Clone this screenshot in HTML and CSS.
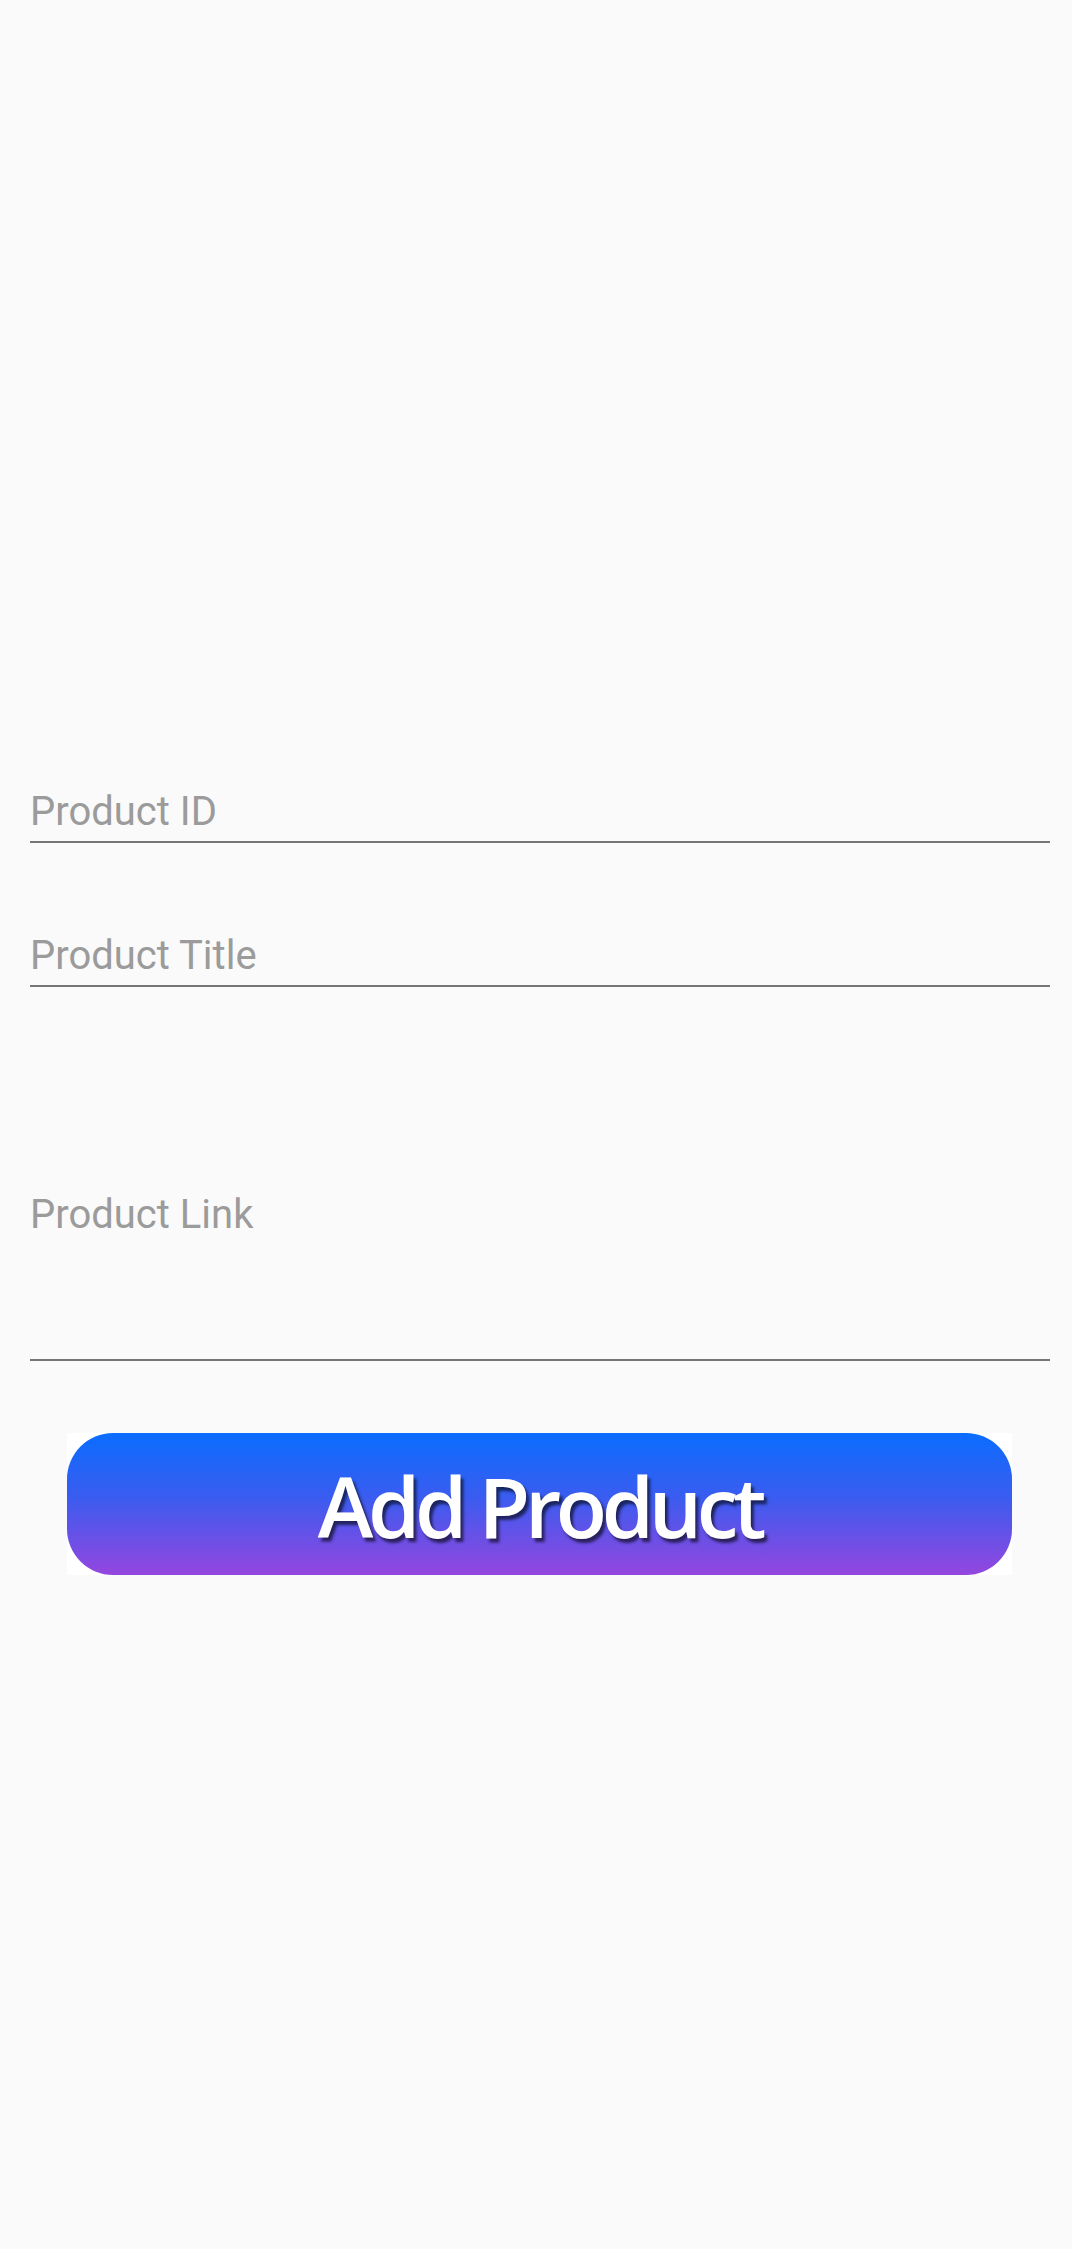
FILE: index.html
```html
<!DOCTYPE html>
<html>
<head>
<meta charset="utf-8">
<link rel="stylesheet" href="styles.css">
</head>
<body>
<main class="form">
  <div class="field field-id"><span class="hint">Product ID</span></div>
  <div class="field field-title"><span class="hint">Product Title</span></div>
  <div class="field field-link"><span class="hint">Product Link</span></div>
  <div class="btn-wrap">
    <button class="btn"><span class="btn-label">Add Product</span></button>
  </div>
</main>
</body>
</html>
```

FILE: styles.css
```css
html, body {
  margin: 0;
  padding: 0;
  background: #fafafa;
}
body {
  width: 1072px;
  height: 2249px;
  font-family: Roboto, "Noto Sans", "Liberation Sans", sans-serif;
}
.form {
  display: flex;
  flex-direction: column;
  padding: 788px 22px 0 30px;
}
.field {
  border-bottom: 2px solid #767676;
  padding-left: 0;
  padding-bottom: 6px;
}
.hint {
  display: block;
  font-size: 40px;
  line-height: 47px;
  color: #9b9b9b;
}
.field-title {
  margin-top: 89px;
}
.field-link {
  margin-top: 204px;
  padding-bottom: 121px;
}
.btn-wrap {
  margin: 72px 38px 0 37px;
  background: #ffffff;
  height: 142px;
  display: flex;
}
.btn {
  flex: 1;
  border: 0;
  padding: 0;
  margin: 0;
  border-radius: 46px;
  background: linear-gradient(180deg, #0a6dfe 0%, #3a5cf0 45%, #9446de 100%);
  display: flex;
  align-items: center;
  justify-content: center;
}
.btn-label {
  font-family: "Open Sans", "Noto Sans", sans-serif;
  font-weight: 600;
  font-size: 84px;
  letter-spacing: -5.3px;
  color: #ffffff;
  text-shadow: 3px 4px 3px rgba(0, 0, 0, 0.6);
  margin-top: 2px;
  margin-left: 0;
}
```
